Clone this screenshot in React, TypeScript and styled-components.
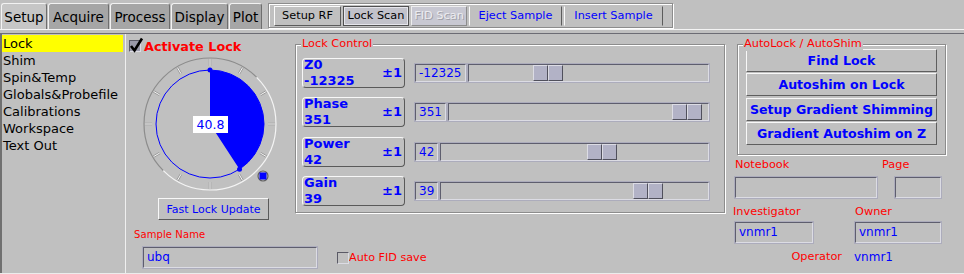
import React from 'react';
import styled, {createGlobalStyle} from 'styled-components';

const BLUE = '#0000ff';
const RED = '#ff0000';

const GlobalStyle = createGlobalStyle`
  html, body {
    margin: 0;
    padding: 0;
    background: #c0c0c0;
  }
  body {
    font-family: "DejaVu Sans", "Noto Sans", sans-serif;
    font-size: 13px;
    color: #000;
  }
  * {
    box-sizing: border-box;
  }
`;

const Screen = styled.div`
  width: 964px;
  height: 274px;
  background: #c0c0c0;
  overflow: hidden;
  display: flex;
  flex-direction: column;
`;

const TopBar = styled.div`
  display: flex;
  align-items: flex-start;
  height: 30px;
  padding: 3px 0 0 1px;
  border-bottom: 1px solid #f4f4f4;
`;

const Tab = styled.div<{$w: number; $active?: boolean}>`
  width: ${p => p.$w}px;
  height: 26px;
  margin-right: 1px;
  display: flex;
  align-items: center;
  justify-content: center;
  background: ${p => (p.$active ? '#c6c6c6' : '#a6a6a6')};
  border-top: 1px solid #f2f2f2;
  border-left: 1px solid #f2f2f2;
  border-right: 1px solid #6e6e6e;
  border-radius: 3px 3px 0 0;
  font-size: 13.5px;
`;

const Toolbar = styled.div`
  margin-left: 5px;
  width: 405px;
  height: 25px;
  display: flex;
  align-items: center;
  gap: 2px;
  padding-left: 5px;
  border: 1px solid #8c8c8c;
  box-shadow: inset 1px 1px 0 #fff, 1px 1px 0 #fff;
`;

type ToolKind = 'raised' | 'pressed' | 'disabled' | 'link';

const ToolButton = styled.div<{$w: number; $kind: ToolKind}>`
  width: ${p => p.$w}px;
  height: 20px;
  display: flex;
  align-items: center;
  justify-content: center;
  font-size: 11.3px;
  border: 1px solid;
  border-color: #fafafa #5c5c5c #5c5c5c #fafafa;
  background: #c0c0c0;
  color: #000;
  ${p => p.$kind === 'pressed' && `
    background: #c2c2ca;
    border-color: #505050;
    box-shadow: inset 0 0 0 1px #e6e6ec;
  `}
  ${p => p.$kind === 'disabled' && `
    background: #c8c8d2;
    border-color: #eeeeee #8c8c8c #8c8c8c #eeeeee;
    color: #ececf0;
    text-shadow: 1px 1px 0 #a0a0a8;
  `}
  ${p => p.$kind === 'link' && `
    color: ${BLUE};
    border-top-color: #c0c0c0;
    border-bottom-color: #c0c0c0;
  `}
`;

const Body = styled.div`
  flex: 1;
  display: flex;
  margin-top: 3px;
  border-top: 1px solid #6c6c74;
  border-bottom: 1px solid #ececec;
`;

const Sidebar = styled.div`
  width: 126px;
  flex: none;
  padding-top: 1px;
  border-left: 2px solid #707070;
  border-right: 1px solid #efefef;
`;

const NavItem = styled.div<{$active?: boolean}>`
  height: 17px;
  line-height: 17px;
  margin-right: 2px;
  padding-left: 1px;
  font-size: 13px;
  white-space: nowrap;
  background: ${p => (p.$active ? '#ffff00' : 'transparent')};
`;

const Main = styled.div`
  flex: 1;
  display: flex;
`;

const LeftArea = styled.div`
  width: 607px;
  display: flex;
  flex-direction: column;
`;

const TopRow = styled.div`
  display: flex;
  align-items: flex-start;
`;

const GaugeCol = styled.div`
  width: 169px;
  flex: none;
  padding-top: 4px;
  display: flex;
  flex-direction: column;
`;

const CheckRow = styled.label`
  height: 16px;
  display: flex;
  align-items: center;
  padding-left: 3px;
  gap: 3px;
`;

const CheckBox = styled.span<{$on?: boolean}>`
  position: relative;
  width: 12px;
  height: 12px;
  flex: none;
  border: 1px solid;
  border-color: #5a5a66 #dcdce4 #dcdce4 #5a5a66;
  background: ${p => (p.$on ? '#9a9aaa' : '#c0c0c0')};
  svg {
    position: absolute;
    left: -1px;
    top: -4px;
  }
`;

const ActivateText = styled.span`
  color: ${RED};
  font-weight: bold;
  font-size: 12.8px;
`;

const GaugeBox = styled.div`
  position: relative;
  width: 140px;
  height: 140px;
  margin-left: 14px;
  svg {
    display: block;
  }
`;

const GaugeValue = styled.div`
  position: absolute;
  left: 53px;
  top: 62px;
  width: 35px;
  height: 17px;
  background: #fff;
  color: ${BLUE};
  font-size: 12.5px;
  line-height: 17px;
  text-align: center;
`;

const PlainButton = styled.div`
  margin: 4px 0 0 32px;
  width: 111px;
  height: 22px;
  display: flex;
  align-items: center;
  justify-content: center;
  color: ${BLUE};
  font-size: 11px;
  border: 1px solid;
  border-color: #f8f8f8 #5a5a5a #5a5a5a #f8f8f8;
`;

const Group = styled.div<{$w: number; $h: number; $ml?: number}>`
  position: relative;
  width: ${p => p.$w}px;
  height: ${p => p.$h}px;
  margin-top: 10px;
  margin-left: ${p => p.$ml ?? 0}px;
  border: 1px solid #8c8c8c;
  box-shadow: inset 1px 1px 0 #fff, 1px 1px 0 #fff;
`;

const GroupTitle = styled.div`
  position: absolute;
  top: -8px;
  left: 5px;
  padding: 0 1px;
  background: #c0c0c0;
  color: ${RED};
  font-size: 11.3px;
  line-height: 14px;
`;

const LockRows = styled.div`
  display: flex;
  flex-direction: column;
  gap: 9.4px;
  padding: 13px 15px 0 6px;
`;

const LockRow = styled.div`
  height: 30px;
  display: flex;
  align-items: center;
`;

const StepButton = styled.div`
  width: 103px;
  height: 30px;
  flex: none;
  display: flex;
  align-items: center;
  justify-content: space-between;
  padding: 0 2px 0 1px;
  border: 1px solid;
  border-color: #f8f8f8 #5a5a5a #5a5a5a #f8f8f8;
  border-radius: 4px;
  color: ${BLUE};
  font-weight: bold;
  font-size: 13px;
  line-height: 16px;
`;

const Sunken = `
  border: 1px solid;
  border-color: #5e5e6e #dcdce4 #dcdce4 #5e5e6e;
  box-shadow: 0 0 0 1px #acacbc;
`;

const ValueField = styled.div`
  height: 18px;
  margin-left: 10px;
  padding: 0 3px;
  flex: none;
  color: ${BLUE};
  font-size: 12px;
  line-height: 16px;
  ${Sunken}
`;

const Track = styled.div`
  position: relative;
  flex: 1;
  height: 18px;
  margin-left: 2px;
  ${Sunken}
`;

const Thumb = styled.div`
  position: absolute;
  top: 0;
  bottom: 0;
  width: 30px;
  display: flex;
`;

const ThumbHalf = styled.div`
  flex: 1;
  background: #b2b2c6;
  border: 1px solid;
  border-color: #dcdce4 #50505c #50505c #dcdce4;
`;

const BottomRow = styled.div`
  display: flex;
  flex-direction: column;
  padding-left: 8px;
`;

const SmallLabel = styled.div`
  margin-top: 8px;
  color: ${RED};
  font-size: 10px;
  line-height: 13px;
  letter-spacing: 0.1px;
`;

const SampleLine = styled.div`
  display: flex;
  align-items: center;
  margin-top: 6px;
`;

const TextBox = styled.div<{$w: number; $ml?: number}>`
  width: ${p => p.$w}px;
  height: 21px;
  margin-left: ${p => p.$ml ?? 0}px;
  flex: none;
  padding-left: 3px;
  color: ${BLUE};
  font-size: 12px;
  line-height: 19px;
  ${Sunken}
`;

const AutoSave = styled.label`
  display: flex;
  align-items: center;
  margin-left: 20px;
  color: ${RED};
  font-size: 11.2px;
`;

const RightCol = styled.div`
  width: 231px;
  flex: none;
  display: flex;
  flex-direction: column;
`;

const AutoButtons = styled.div`
  display: flex;
  flex-direction: column;
  gap: 1.33px;
  padding: 4px 8px;
`;

const AutoButton = styled.div`
  height: 23px;
  display: flex;
  align-items: center;
  justify-content: center;
  color: ${BLUE};
  font-weight: bold;
  font-size: 12.6px;
  white-space: nowrap;
  border: 1px solid;
  border-color: #f8f8f8 #5e5e5e #5e5e5e #f8f8f8;
`;

const FieldRow = styled.div<{$mt: number; $pl?: number}>`
  display: flex;
  align-items: center;
  margin-top: ${p => p.$mt}px;
  padding-left: ${p => p.$pl ?? 0}px;
`;

const FieldLabel = styled.div<{$w?: number; $right?: boolean}>`
  width: ${p => (p.$w ? `${p.$w}px` : 'auto')};
  text-align: ${p => (p.$right ? 'right' : 'left')};
  color: ${RED};
  font-size: 11.3px;
  line-height: 14px;
`;

const FieldValue = styled.div`
  margin-left: 12px;
  color: ${BLUE};
  font-size: 12px;
  line-height: 14px;
`;

const tabs = [
  {label: 'Setup', w: 46, active: true},
  {label: 'Acquire', w: 61},
  {label: 'Process', w: 60},
  {label: 'Display', w: 57},
  {label: 'Plot', w: 33},
];

const tools: {label: string; w: number; kind: ToolKind}[] = [
  {label: 'Setup RF', w: 67, kind: 'raised'},
  {label: 'Lock Scan', w: 66, kind: 'pressed'},
  {label: 'FID Scan', w: 56, kind: 'disabled'},
  {label: 'Eject Sample', w: 93, kind: 'link'},
  {label: 'Insert Sample', w: 99, kind: 'link'},
];

const navItems = ['Lock', 'Shim', 'Spin&Temp', 'Globals&Probefile', 'Calibrations', 'Workspace', 'Text Out'];

const lockRows = [
  {name: 'Z0', value: '-12325', pos: 0.31},
  {name: 'Phase', value: '351', pos: 0.974},
  {name: 'Power', value: '42', pos: 0.614},
  {name: 'Gain', value: '39', pos: 0.809},
];

const autoButtons = ['Find Lock', 'Autoshim on Lock', 'Setup Gradient Shimming', 'Gradient Autoshim on Z'];

const CheckMark = () => (
  <svg width="15" height="16" viewBox="0 0 15 16">
    <path d="M2 9 L5.5 13.5 L13 1.5" fill="none" stroke="#000" strokeWidth="2.6"/>
  </svg>
);

const LockGauge: React.FC<{value: number}> = ({value}) => {
  const c = 70;
  const r = 54;
  const pt = (deg: number, rad: number) => {
    const a = (deg * Math.PI) / 180;
    return [c + rad * Math.sin(a), c - rad * Math.cos(a)];
  };
  const end = (value / 100) * 360;
  const [ex, ey] = pt(end, r);
  const [g1x, g1y] = pt(45, 66);
  const [g2x, g2y] = pt(225, 66);
  const ticks = Array.from({length: 12}, (_, i) => i * 30);

  return (
    <GaugeBox>
      <svg width="140" height="140" viewBox="0 0 140 140">
        <path d={`M${g1x} ${g1y} A66 66 0 0 0 ${g2x} ${g2y}`} fill="none" stroke="#8c8c8c" strokeWidth="1.2"/>
        <path d={`M${g2x} ${g2y} A66 66 0 0 0 ${g1x} ${g1y}`} fill="none" stroke="#f4f4f4" strokeWidth="1.2"/>
        {ticks.map(t => {
          const [x1, y1] = pt(t, 58);
          const [x2, y2] = pt(t, 65);
          return (
            <g key={t}>
              <line x1={x1} y1={y1} x2={x2} y2={y2} stroke="#949494" strokeWidth="2.4"/>
              <line x1={x1} y1={y1} x2={x2} y2={y2} stroke="#f6f6f6" strokeWidth="1"/>
            </g>
          );
        })}
        <circle cx={c} cy={c} r={r} fill="none" stroke={BLUE} strokeWidth="1"/>
        <path d={`M${c} ${c} L${c} ${c - r} A${r} ${r} 0 0 1 ${ex} ${ey} Z`} fill={BLUE}/>
        <circle cx={c} cy={c - r} r="2.5" fill={BLUE}/>
        <circle cx={ex} cy={ey} r="2.5" fill={BLUE}/>
        <circle cx="123" cy="122" r="5" fill="#c0c0c0" stroke="#606060" strokeWidth="1.2"/>
        <rect x="119.5" y="118.5" width="7" height="7" fill={BLUE}/>
      </svg>
      <GaugeValue>{value.toFixed(1)}</GaugeValue>
    </GaugeBox>
  );
};

const App: React.FC = () => {
  return (
    <Screen>
      <GlobalStyle/>
      <TopBar>
        {tabs.map(t => (
          <Tab key={t.label} $w={t.w} $active={t.active}>{t.label}</Tab>
        ))}
        <Toolbar>
          {tools.map(t => (
            <ToolButton key={t.label} $w={t.w} $kind={t.kind}>{t.label}</ToolButton>
          ))}
        </Toolbar>
      </TopBar>
      <Body>
        <Sidebar>
          {navItems.map((n, i) => (
            <NavItem key={n} $active={i === 0}>{n}</NavItem>
          ))}
        </Sidebar>
        <Main>
          <LeftArea>
            <TopRow>
              <GaugeCol>
                <CheckRow>
                  <CheckBox $on><CheckMark/></CheckBox>
                  <ActivateText>Activate Lock</ActivateText>
                </CheckRow>
                <LockGauge value={40.8}/>
                <PlainButton>Fast Lock Update</PlainButton>
              </GaugeCol>
              <Group $w={430} $h={169}>
                <GroupTitle>Lock Control</GroupTitle>
                <LockRows>
                  {lockRows.map(r => (
                    <LockRow key={r.name}>
                      <StepButton>
                        <div>{r.name}<br/>{r.value}</div>
                        <span>±1</span>
                      </StepButton>
                      <ValueField>{r.value}</ValueField>
                      <Track>
                        <Thumb style={{left: `calc((100% - 30px) * ${r.pos})`}}>
                          <ThumbHalf/>
                          <ThumbHalf/>
                        </Thumb>
                      </Track>
                    </LockRow>
                  ))}
                </LockRows>
              </Group>
            </TopRow>
            <BottomRow>
              <SmallLabel>Sample Name</SmallLabel>
              <SampleLine>
                <TextBox $w={174} $ml={9}>ubq</TextBox>
                <AutoSave>
                  <CheckBox/>
                  Auto FID save
                </AutoSave>
              </SampleLine>
            </BottomRow>
          </LeftArea>
          <RightCol>
            <Group $w={209} $h={111} $ml={4}>
              <GroupTitle>AutoLock / AutoShim</GroupTitle>
              <AutoButtons>
                {autoButtons.map(b => (
                  <AutoButton key={b}>{b}</AutoButton>
                ))}
              </AutoButtons>
            </Group>
            <FieldRow $mt={3} $pl={2}>
              <FieldLabel $w={147}>Notebook</FieldLabel>
              <FieldLabel>Page</FieldLabel>
            </FieldRow>
            <FieldRow $mt={5} $pl={2}>
              <TextBox $w={142}/>
              <TextBox $w={46} $ml={18}/>
            </FieldRow>
            <FieldRow $mt={7}>
              <FieldLabel $w={122}>Investigator</FieldLabel>
              <FieldLabel>Owner</FieldLabel>
            </FieldRow>
            <FieldRow $mt={3} $pl={2}>
              <TextBox $w={78}>vnmr1</TextBox>
              <TextBox $w={86} $ml={42}>vnmr1</TextBox>
            </FieldRow>
            <FieldRow $mt={7}>
              <FieldLabel $w={109} $right>Operator</FieldLabel>
              <FieldValue>vnmr1</FieldValue>
            </FieldRow>
          </RightCol>
        </Main>
      </Body>
    </Screen>
  );
};

export default App;
